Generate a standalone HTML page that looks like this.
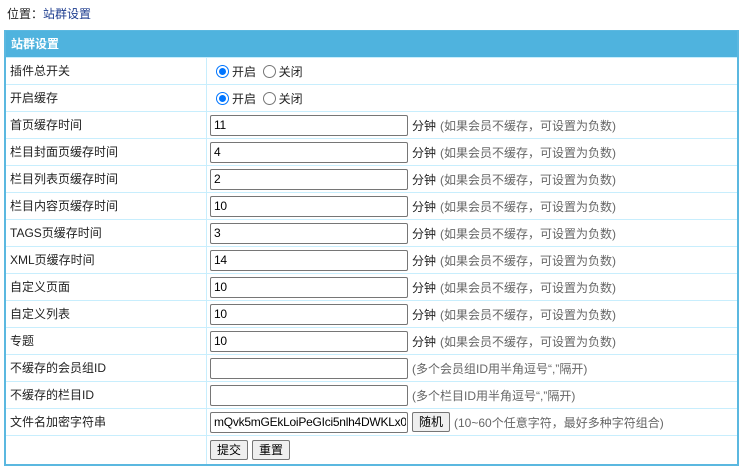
<!DOCTYPE html>
<html><head><meta charset="utf-8"><style>
body{margin:0;background:#fff;font-family:"Liberation Sans","Noto Sans CJK SC",sans-serif;font-size:12px;color:#222;}
.pos{position:absolute;left:7px;top:6px;line-height:16px;color:#222}
.pos span{color:#1d3c8f}
.tbl{position:absolute;left:4px;top:30px;width:731px;border:2px solid #5bb8e0;border-top-width:1px}
.hd{height:26px;background:#4fb3de;color:#fff;font-weight:bold;line-height:26px;padding-left:5px;font-size:12px}
.r{height:26px;border-top:1px solid #c8eefd;position:relative}
.r .l{position:absolute;left:0;top:0;width:196px;height:100%;border-right:1px solid #c8eefd;padding-left:4px;line-height:26px}
.r .v{position:absolute;left:204px;top:0;right:0;height:100%;display:flex;align-items:center}
input.t{box-sizing:border-box;width:198px;height:21px;border:1px solid #767676;border-radius:2px;padding:0 1px 0 3px;font:12px "Liberation Sans",sans-serif;letter-spacing:-0.25px;color:#000;margin:0}
.h{color:#666;margin-left:4px}
.u{color:#222;margin-left:4px}
.rad{display:inline-block;width:13px;height:13px;border:1px solid #767676;border-radius:50%;box-sizing:border-box;vertical-align:-2px;margin:0 3px 0 0;position:relative}
.rad.on{border-color:#0075ff;border-width:1px}
.rad.on::after{content:"";position:absolute;left:2px;top:2px;width:7px;height:7px;border-radius:50%;background:#0075ff}
.btn{display:inline-block;height:20px;line-height:18px;box-sizing:border-box;border:1px solid #767676;border-radius:2px;background:#efefef;padding:0 6px;font-size:12px;color:#000}
</style></head><body>
<div class="pos">位置：<span>站群设置</span></div>
<div class="tbl">
<div class="hd">站群设置</div>
<div class="r"><div class="l">插件总开关</div><div class="v" style="left:210px"><span class="rad on"></span>开启&nbsp;&nbsp;<span class="rad"></span>关闭</div></div>
<div class="r"><div class="l">开启缓存</div><div class="v" style="left:210px"><span class="rad on"></span>开启&nbsp;&nbsp;<span class="rad"></span>关闭</div></div>
<div class="r"><div class="l">首页缓存时间</div><div class="v"><input class="t" value="11"><span class="u">分钟</span><span class="h">(如果会员不缓存，可设置为负数)</span></div></div>
<div class="r"><div class="l">栏目封面页缓存时间</div><div class="v"><input class="t" value="4"><span class="u">分钟</span><span class="h">(如果会员不缓存，可设置为负数)</span></div></div>
<div class="r"><div class="l">栏目列表页缓存时间</div><div class="v"><input class="t" value="2"><span class="u">分钟</span><span class="h">(如果会员不缓存，可设置为负数)</span></div></div>
<div class="r"><div class="l">栏目内容页缓存时间</div><div class="v"><input class="t" value="10"><span class="u">分钟</span><span class="h">(如果会员不缓存，可设置为负数)</span></div></div>
<div class="r"><div class="l">TAGS页缓存时间</div><div class="v"><input class="t" value="3"><span class="u">分钟</span><span class="h">(如果会员不缓存，可设置为负数)</span></div></div>
<div class="r"><div class="l">XML页缓存时间</div><div class="v"><input class="t" value="14"><span class="u">分钟</span><span class="h">(如果会员不缓存，可设置为负数)</span></div></div>
<div class="r"><div class="l">自定义页面</div><div class="v"><input class="t" value="10"><span class="u">分钟</span><span class="h">(如果会员不缓存，可设置为负数)</span></div></div>
<div class="r"><div class="l">自定义列表</div><div class="v"><input class="t" value="10"><span class="u">分钟</span><span class="h">(如果会员不缓存，可设置为负数)</span></div></div>
<div class="r"><div class="l">专题</div><div class="v"><input class="t" value="10"><span class="u">分钟</span><span class="h">(如果会员不缓存，可设置为负数)</span></div></div>
<div class="r"><div class="l">不缓存的会员组ID</div><div class="v"><input class="t" value=""><span class="h">(多个会员组ID用半角逗号“,”隔开)</span></div></div>
<div class="r"><div class="l">不缓存的栏目ID</div><div class="v"><input class="t" value=""><span class="h">(多个栏目ID用半角逗号“,”隔开)</span></div></div>
<div class="r"><div class="l">文件名加密字符串</div><div class="v"><input class="t" value="mQvk5mGEkLoiPeGIci5nlh4DWKLx0"><span class="btn" style="margin-left:4px">随机</span><span class="h">(10~60个任意字符，最好多种字符组合)</span></div></div>
<div class="r" style="height:28px"><div class="l"></div><div class="v"><span class="btn">提交</span><span class="btn" style="margin-left:4px">重置</span></div></div>
</div>
</body></html>
